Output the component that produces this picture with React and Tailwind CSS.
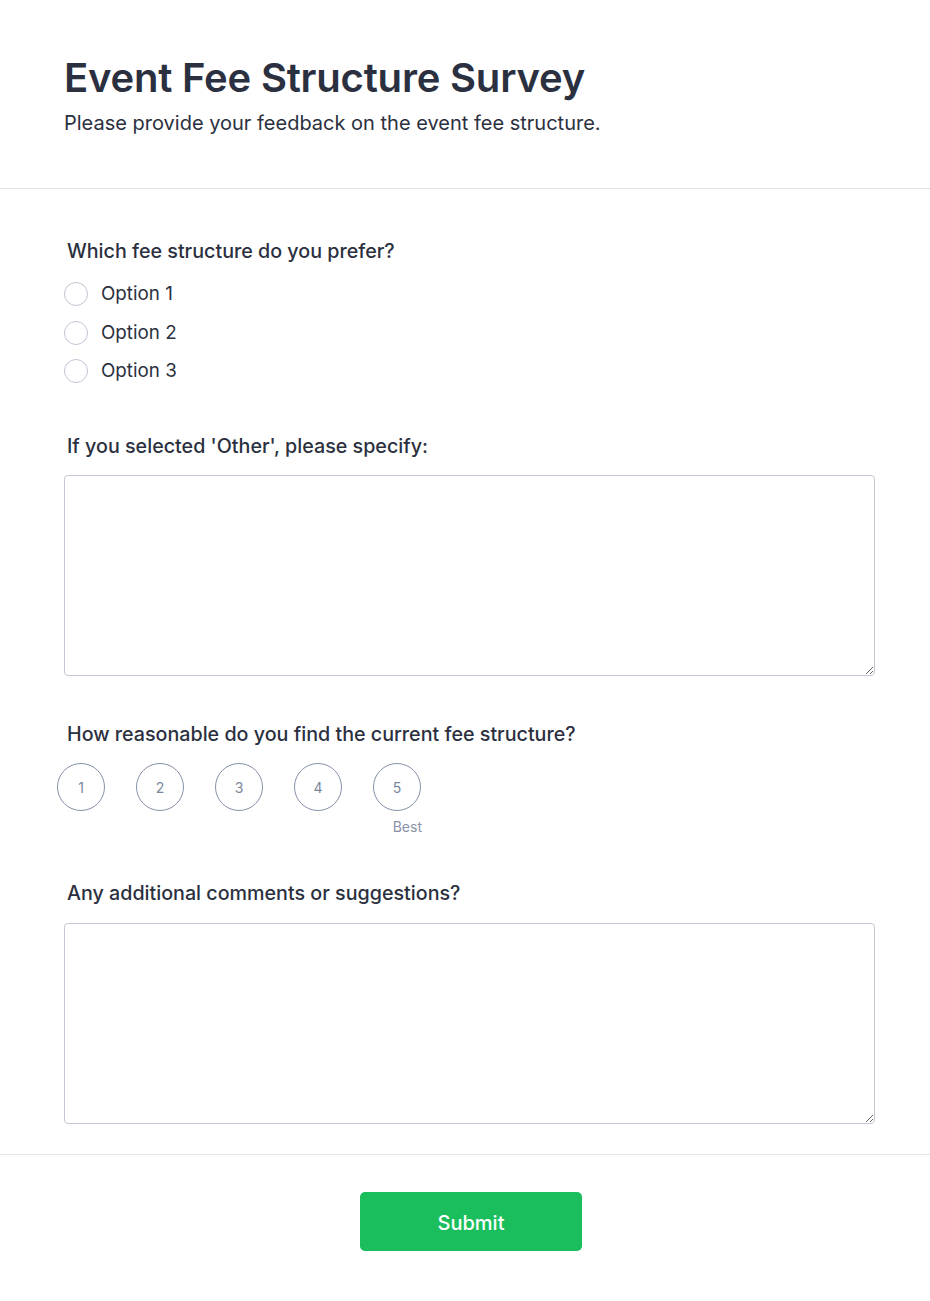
export default function App() {
  const font = { fontFamily: "Inter, 'Noto Sans', sans-serif" };
  return (
    <div className="min-h-[1301px] bg-white text-[#2b3040]" style={font}>
      <header className="pl-[64px] pr-[55px] pt-[54px] pb-[52px] border-b border-[#dde1e8]">
        <h1 className="text-[40px] leading-[48px] font-semibold text-[#2b3040] tracking-[-0.2px]">Event Fee Structure Survey</h1>
        <p className="mt-[8px] text-[20px] leading-[26px] text-[#2b3040]">Please provide your feedback on the event fee structure.</p>
      </header>

      <main className="pl-[64px] pr-[55px] pt-[49px] pb-[30px]">
        <section>
          <h2 className="pl-[3px] text-[19.7px] leading-[26px] font-medium">Which fee structure do you prefer?</h2>
          <div className="mt-[18px] flex flex-col gap-[14.5px]">
            {["Option 1", "Option 2", "Option 3"].map((o) => (
              <label key={o} className="flex items-center gap-[13px] h-[24px]">
                <span className="w-[24px] h-[24px] rounded-full border border-[#bfc5d1] bg-white"></span>
                <span className="text-[18.8px] leading-[24px] text-[#2b3040]">{o}</span>
              </label>
            ))}
          </div>
        </section>

        <section className="mt-[50px]">
          <h2 className="pl-[3px] text-[19.7px] leading-[26px] font-medium">If you selected 'Other', please specify:</h2>
          <textarea className="mt-[16px] block w-full h-[201px] rounded-[4px] border border-[#c3c8d3] bg-white outline-none resize-y" />
        </section>

        <section className="mt-[45px]">
          <h2 className="pl-[3px] text-[19.7px] leading-[26px] font-medium">How reasonable do you find the current fee structure?</h2>
          <div className="mt-[16px] -ml-[7px] flex gap-[31px]">
            {[1, 2, 3, 4, 5].map((n) => (
              <div key={n} className="flex flex-col items-end">
                <div className="w-[48px] h-[48px] rounded-full border border-[#8690a8] flex items-center justify-center text-[14px] text-[#7a879c]">{n}</div>
                <span className={`mt-[7px] mr-[-1px] text-[14px] leading-[18px] text-[#8993a5] ${n === 5 ? "" : "invisible"}`}>Best</span>
              </div>
            ))}
          </div>
        </section>

        <section className="mt-[44px]">
          <h2 className="pl-[3px] text-[19.7px] leading-[26px] font-medium">Any additional comments or suggestions?</h2>
          <textarea className="mt-[17px] block w-full h-[201px] rounded-[4px] border border-[#c3c8d3] bg-white outline-none resize-y" />
        </section>
      </main>

      <footer className="border-t border-[#e3e6ec] pt-[37px] flex justify-center">
        <button className="ml-[12px] w-[222px] h-[59px] pt-[3px] rounded-[5px] bg-[#1abe5d] text-white text-[20px] font-medium">Submit</button>
      </footer>
    </div>
  );
}
